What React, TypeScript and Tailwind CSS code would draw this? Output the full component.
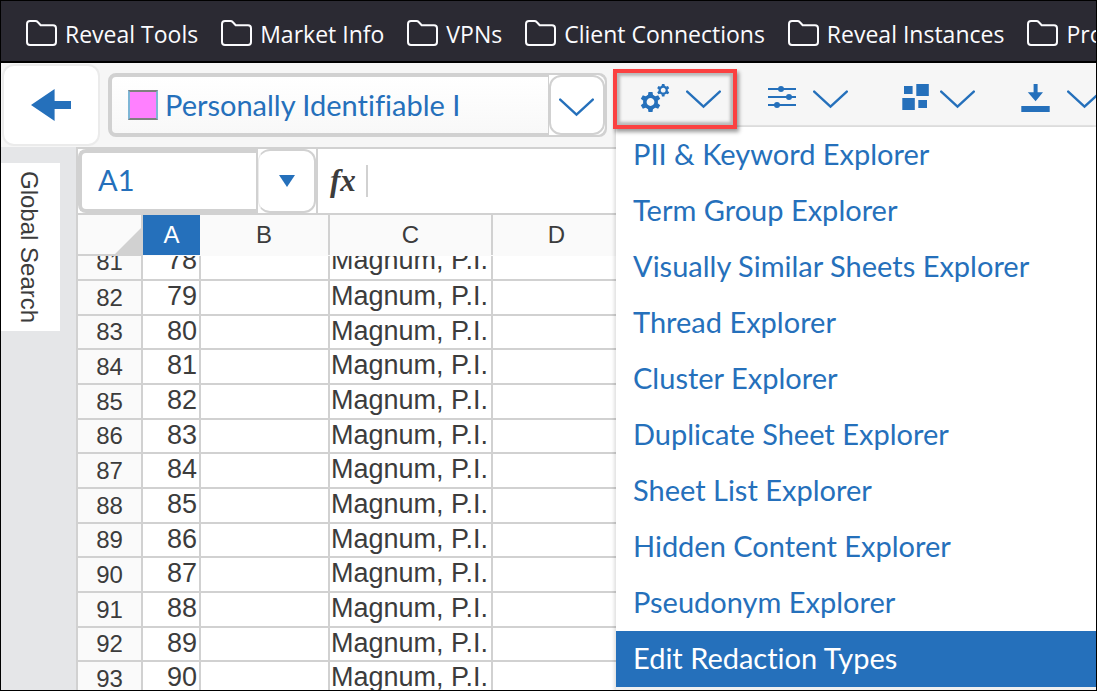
import React from "react";

const bookmarks = [
  "Reveal Tools",
  "Market Info",
  "VPNs",
  "Client Connections",
  "Reveal Instances",
  "Productivity",
];

const menuItems = [
  "PII & Keyword Explorer",
  "Term Group Explorer",
  "Visually Similar Sheets Explorer",
  "Thread Explorer",
  "Cluster Explorer",
  "Duplicate Sheet Explorer",
  "Sheet List Explorer",
  "Hidden Content Explorer",
  "Pseudonym Explorer",
  "Edit Redaction Types",
];

const rows = Array.from({ length: 13 }, (_, i) => ({ row: 81 + i, id: 78 + i, name: "Magnum, P.I." }));

const FolderIcon = () => (
  <svg className="h-7 w-8 shrink-0" viewBox="0 0 32 28" fill="none" stroke="currentColor" strokeWidth="2" strokeLinejoin="round">
    <path d="M1 4a3 3 0 0 1 3-3h5.5a3 3 0 0 1 2.2 1l3 3.2H27a3 3 0 0 1 3 3V22a3 3 0 0 1-3 3H4a3 3 0 0 1-3-3z" />
  </svg>
);

const Chevron = () => (
  <svg className="h-5 w-9 shrink-0" viewBox="0 0 36 20" fill="none" stroke="currentColor" strokeWidth="2.4" strokeLinecap="round">
    <path d="M1.2 2.6L17.5 17.6 33.8 2.6" />
  </svg>
);

const Gear = ({ x, y, scale }: { x: number; y: number; scale: number }) => (
  <g transform={`translate(${x} ${y}) scale(${scale})`}>
    <circle r="5.7" fill="none" stroke="currentColor" strokeWidth="3.6" />
    {[0, 60, 120, 180, 240, 300].map((angle) => (
      <path key={angle} transform={`rotate(${angle})`} d="M-2.6-6.5L-2-10H2L2.6-6.5z" />
    ))}
  </g>
);

const GearsIcon = () => (
  <svg className="h-8 w-[46px] shrink-0" viewBox="0 0 46 32" fill="currentColor">
    <Gear x={10.5} y={19} scale={1} />
    <Gear x={23.2} y={7.2} scale={0.62} />
  </svg>
);

const SlidersIcon = () => (
  <svg className="h-8 w-[46px] shrink-0" viewBox="0 0 46 32" fill="currentColor">
    <path d="M1 5h28v1.9H1zM1 13.1h28V15H1zM1 21h28v1.9H1z" />
    <circle cx="14" cy="6" r="3" />
    <circle cx="22" cy="14.1" r="3" />
    <circle cx="10" cy="22" r="3" />
  </svg>
);

const TilesIcon = () => (
  <svg className="h-8 w-[46px] shrink-0" viewBox="0 0 46 32" fill="currentColor">
    <path d="M10 3h8.6v8H10zM22.3 1h12.5v12H22.3zM8.3 15h12.5v12H8.3zM24.3 17H33v8h-8.7z" />
  </svg>
);

const DownloadIcon = () => (
  <svg className="h-8 w-[46px] shrink-0" viewBox="0 0 46 32" fill="currentColor">
    <path d="M12.6 1h4v8.3H22l-7.4 9-7.8-9h5.8zM.3 23h28.4v6H.3z" />
  </svg>
);

const toolButtons = [
  { label: "Explorers", icon: <GearsIcon />, active: true },
  { label: "Filters", icon: <SlidersIcon />, active: false },
  { label: "Layout", icon: <TilesIcon />, active: false },
  { label: "Download", icon: <DownloadIcon />, active: false },
];

const BookmarksBar = () => (
  <nav className="flex h-[62px] shrink-0 items-center gap-[23px] overflow-hidden border-b-2 border-black bg-[#2b2a33] pt-1.5 pl-[25px] font-['Open_Sans',sans-serif] text-[23px] text-[#fbfbfe]">
    {bookmarks.map((name) => (
      <a key={name} href="#" className="flex shrink-0 items-center gap-[7px] whitespace-nowrap">
        <FolderIcon />
        {name}
      </a>
    ))}
  </nav>
);

const Toolbar = () => (
  <header className="flex h-[84px] shrink-0 bg-[#f6f6f6] text-[#2570bb]">
    <button
      aria-label="Back"
      className="mt-px ml-px flex h-[82px] w-[98px] shrink-0 items-center justify-center rounded-xl border-2 border-[#ebebeb] bg-white"
    >
      <svg className="h-8 w-10" viewBox="0 0 40 32" fill="currentColor">
        <path d="M0 16L23.6 0v12H40v8H23.6v12z" />
      </svg>
    </button>

    <div className="mt-[10px] ml-2 flex h-16 w-[499px] shrink-0 rounded-lg border-4 border-[#d1d1d1] bg-gradient-to-b from-white to-[#f8f8f8]">
      <label className="flex min-w-0 flex-1 items-center gap-[7px] pl-4">
        <span className="h-[30px] w-[30px] shrink-0 border-2 border-x-[#7fb6d6] border-y-[#808080] bg-[#ff80ff]" />
        <input
          aria-label="Redaction type"
          defaultValue="Personally Identifiable I"
          className="w-full min-w-0 bg-transparent font-['Lato',sans-serif] text-[29px] [font-variant-ligatures:none] outline-none"
        />
      </label>
      <div className="-my-0.5 -mr-0.5 w-[57px] rounded-r-lg border-l border-[#d1d1d1] bg-white">
        <button
          aria-label="Choose redaction type"
          className="flex h-full w-full items-center justify-center rounded-xl border-2 border-[#d1d1d1] bg-white pt-1"
        >
          <Chevron />
        </button>
      </div>
    </div>

    <div className="relative ml-[6px] flex h-16 min-w-0 flex-1 gap-[3px] border-b-2 border-[#e6e6e6] pt-[6px]">
      {toolButtons.map((tool) => (
        <button
          key={tool.label}
          aria-label={tool.label}
          className={
            tool.active
              ? "z-20 flex h-[60px] w-[124px] shrink-0 items-center border-4 border-[#fb4141] bg-[#f6f6f6] pl-[23px] shadow-[2px_3px_4px_rgba(0,0,0,0.4),inset_0_0_3px_3px_rgba(0,0,0,0.25)]"
              : "flex h-[60px] w-[124px] shrink-0 items-center border-4 border-transparent pl-[23px]"
          }
        >
          {tool.icon}
          <Chevron />
        </button>
      ))}
      <ExplorerMenu />
    </div>
  </header>
);

const ExplorerMenu = () => (
  <ul className="absolute top-16 right-0 left-[3px] z-10 border-b-4 border-[#f0f0f0] bg-white font-['Lato',sans-serif] text-[29px] [font-variant-ligatures:none] shadow-[-2px_0_3px_rgba(0,0,0,0.12)]">
    {menuItems.map((item) => (
      <li key={item}>
        <button
          className={
            item === "Edit Redaction Types"
              ? "flex h-14 w-full items-center bg-[#2570bb] pb-0.5 pl-[17px] text-white"
              : "flex h-14 w-full items-center pb-0.5 pl-[17px]"
          }
        >
          {item}
        </button>
      </li>
    ))}
  </ul>
);

const FormulaBar = () => (
  <div className="flex h-[66px] shrink-0 border-t-2 border-[#d1d1d1]">
    <div className="flex w-[238px] shrink-0 rounded-lg border-4 border-r-0 border-[#d1d1d1]">
      <input
        aria-label="Cell reference"
        defaultValue="A1"
        className="w-[176px] border-r-2 border-[#d1d1d1] pb-0.5 pl-4 font-['Lato',sans-serif] text-[29px] text-[#2570bb] outline-none"
      />
      <div className="-my-1 flex-1 bg-white">
        <button
          aria-label="Named ranges"
          className="flex h-full w-full items-center justify-center rounded-xl border-2 border-l border-[#d1d1d1] border-l-[#ebebeb] bg-white text-[#2570bb]"
        >
          <svg className="h-3 w-4" viewBox="0 0 16 12" fill="currentColor">
            <path d="M0 0h16L8 12z" />
          </svg>
        </button>
      </div>
    </div>
    <label className="flex flex-1 items-center border-l-2 border-[#d1d1d1] pl-3 text-[#3c3c3c]">
      <span className="w-9 font-['Liberation_Serif',serif] text-[31px] font-bold italic">fx</span>
      <input aria-label="Formula" className="h-8 min-w-0 flex-1 border-l-2 border-[#d1d1d1] outline-none" />
    </label>
  </div>
);

const Columns = () => (
  <colgroup>
    <col className="w-[64px]" />
    <col className="w-[58px]" />
    <col className="w-[129px]" />
    <col className="w-[163px]" />
    <col className="w-[128px]" />
    <col />
  </colgroup>
);

const Sheet = () => (
  <div className="min-h-0 flex-1 overflow-hidden border-t-2 border-[#d1d1d1] font-['Liberation_Sans',sans-serif] text-[#3c3c3c]">
    <table className="w-full table-fixed bg-[#fafafa] text-2xl">
      <Columns />
      <thead>
        <tr className="h-10">
          <th className="border-r-2 border-b-2 border-[#d1d1d1] p-0 align-bottom" aria-label="Select all">
            <svg className="ml-auto block h-[26px] w-[26px]" viewBox="0 0 26 26" fill="#d1d1d1">
              <path d="M26 0v26H0z" />
            </svg>
          </th>
          <th className="bg-[#2570bb] p-0 font-normal text-white">A</th>
          <th className="border-r-2 border-[#d1d1d1] p-0 font-normal">B</th>
          <th className="border-r-2 border-[#d1d1d1] p-0 font-normal">C</th>
          <th className="p-0 font-normal">D</th>
          <th className="p-0" />
        </tr>
      </thead>
    </table>
    <div className="overflow-hidden">
      <table className="-mt-[11px] w-full table-fixed">
        <Columns />
        <tbody>
          {rows.map((r) => (
            <tr key={r.row} className="h-[35px] text-[27px] leading-[30px] nth-[3n]:h-[34px] [&>td]:border-r-2 [&>td]:border-b-2 [&>td]:border-[#d1d1d1] [&>td]:p-0 [&>td]:align-top">
              <th className="border-r-2 border-b-2 border-[#d1d1d1] bg-[#fafafa] p-0 text-2xl leading-8 font-normal">{r.row}</th>
              <td className="text-right">
                <span className="pr-0.5">{r.id}</span>
              </td>
              <td />
              <td className="whitespace-nowrap">
                <span className="pl-px">{r.name}</span>
              </td>
              <td />
              <td />
            </tr>
          ))}
        </tbody>
      </table>
    </div>
  </div>
);

const App = () => {
  return (
    <div className="flex h-screen flex-col overflow-hidden border border-black bg-white">
      <BookmarksBar />
      <Toolbar />
      <div className="flex min-h-0 flex-1">
        <aside className="w-[75px] shrink-0 bg-[#e5e6e8] pt-4">
          <button className="flex h-[168px] w-[59px] items-center justify-center bg-white pr-1 font-['Liberation_Sans',sans-serif] text-2xl text-[#3c3c3c] [writing-mode:vertical-rl]">
            Global Search
          </button>
        </aside>
        <main className="flex min-w-0 flex-1 flex-col border-l-2 border-[#d1d1d1]">
          <FormulaBar />
          <Sheet />
        </main>
      </div>
    </div>
  );
};

export default App;
